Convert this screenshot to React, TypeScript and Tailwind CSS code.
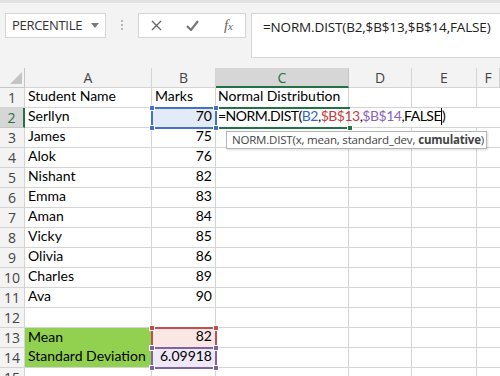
import React from "react";

const uiFont = { fontFamily: '"Open Sans", "Noto Sans", sans-serif' };
const cellFont = { fontFamily: 'Lato, "Liberation Sans", sans-serif' };

const columns = ["A", "B", "C", "D", "E", "F"];

type Row = { a?: string; b?: string; c?: React.ReactNode; bText?: boolean };

const rows: Row[] = [
  { a: "Student Name", b: "Marks", c: "Normal Distribution", bText: true },
  { a: "Serllyn", b: "70" },
  { a: "James", b: "75" },
  { a: "Alok", b: "76" },
  { a: "Nishant", b: "82" },
  { a: "Emma", b: "83" },
  { a: "Aman", b: "84" },
  { a: "Vicky", b: "85" },
  { a: "Olivia", b: "86" },
  { a: "Charles", b: "89" },
  { a: "Ava", b: "90" },
  {},
  { a: "Mean", b: "82" },
  { a: "Standard Deviation", b: "6.09918" },
  {},
];

function Formula() {
  return (
    <span className="whitespace-nowrap tracking-[-0.5px] text-black">
      =NORM.DIST(<span className="text-[#3566c4]">B2</span>,
      <span className="text-[#c0403d]">$B$13</span>,
      <span className="text-[#8a63b8]">$B$14</span>,FALSE
      <span className="inline-block h-[17px] w-px bg-black align-[-4px]" />)
    </span>
  );
}

function Handles({ color }: { color: string }) {
  const sq = "absolute h-[6px] w-[6px] border border-white";
  return (
    <>
      <span className={`${sq} -left-[4px] -top-[4px]`} style={{ background: color }} />
      <span className={`${sq} -right-[4px] -top-[4px]`} style={{ background: color }} />
      <span className={`${sq} -left-[4px] -bottom-[4px]`} style={{ background: color }} />
      <span className={`${sq} -right-[4px] -bottom-[4px]`} style={{ background: color }} />
    </>
  );
}

function TopBar() {
  return (
    <div className="h-[68px] shrink-0 overflow-hidden border-t-[3px] border-[#e2e2e2] bg-[#f3f3f3]">
      <div className="flex items-start pl-[5px] pt-[10px]">
        <div
          className="flex h-[25px] w-[101px] shrink-0 items-center justify-between border border-[#d5d5d5] bg-white pl-[6px] pr-[6px] text-[13px] text-[#333]"
          style={uiFont}
        >
          <span className="tracking-[-0.3px]">PERCENTILE</span>
          <svg width="8" height="5" viewBox="0 0 8 5">
            <path d="M0 0h8L4 5z" fill="#7a7a7a" />
          </svg>
        </div>
        <div className="flex w-[32px] shrink-0 flex-col items-center gap-[2px] pt-[7px]">
          <span className="h-[2px] w-[2px] bg-[#b5b5b5]" />
          <span className="h-[2px] w-[2px] bg-[#b5b5b5]" />
          <span className="h-[2px] w-[2px] bg-[#b5b5b5]" />
        </div>
        <div className="flex h-[25px] w-[108px] shrink-0 items-center justify-between border border-[#d5d5d5] bg-white px-[12px]">
          <svg width="11" height="11" viewBox="0 0 11 11">
            <path d="M1 1l9 9M10 1l-9 9" stroke="#666" strokeWidth="1.4" />
          </svg>
          <svg width="13" height="11" viewBox="0 0 13 11">
            <path d="M1 6l4 4 7-9" stroke="#777" strokeWidth="2.2" fill="none" />
          </svg>
          <span
            className="text-[15px] italic text-[#666]"
            style={{ fontFamily: '"Liberation Serif", serif' }}
          >
            f<span className="text-[11px]">x</span>
          </span>
        </div>
        <div
          className="ml-[5px] h-[45px] w-[260px] shrink-0 border border-[#d5d5d5] bg-white pl-[11px] pt-[3px] text-[13.5px] tracking-[-0.15px] text-[#222]"
          style={uiFont}
        >
          =NORM.DIST(B2,$B$13,$B$14,FALSE)
        </div>
      </div>
    </div>
  );
}

function Sheet() {
  const widths = "grid-cols-[25px_127px_64px_133px_63px_65px_1fr]";
  return (
    <div className="relative flex-1 overflow-hidden bg-white">
      <div className={`grid ${widths} auto-rows-[20px]`}>
        <div className="relative border-r border-b border-[#c6c6c6] bg-[#f3f3f3]">
          <svg className="absolute bottom-[3px] right-[2px]" width="12" height="12" viewBox="0 0 12 12">
            <path d="M0 12H12V0z" fill="#c4c4c4" />
          </svg>
        </div>
        {columns.map((c) => (
          <div
            key={c}
            className={
              c === "C"
                ? "flex items-center justify-center border-r border-b-2 border-r-[#c6c6c6] border-b-[#217346] bg-[#d6d6d6] text-[14px] text-[#217346]"
                : "flex items-center justify-center border-r border-b border-[#d4d4d4] bg-[#f3f3f3] text-[14px] text-[#444]"
            }
            style={uiFont}
          >
            {c}
          </div>
        ))}
        {rows.map((r, i) => {
          const n = i + 1;
          const green = n === 13 || n === 14;
          return (
            <React.Fragment key={n}>
              <div
                className={
                  n === 2
                    ? "flex items-center justify-center border-r-2 border-b border-r-[#217346] border-b-[#c6c6c6] bg-[#d6d6d6] text-[14px] text-[#217346]"
                    : "flex items-center justify-center border-r border-b border-[#d4d4d4] bg-[#f3f3f3] text-[14px] text-[#444]"
                }
                style={uiFont}
              >
                {n}
              </div>
              <div
                className={
                  green
                    ? `flex items-end border-r border-[#92d050] bg-[#92d050] px-[3px] pb-[1px] text-[14px] text-black ${n === 14 ? "border-b border-b-[#d4d4d4]" : ""}`
                    : "flex items-end border-r border-b border-[#d4d4d4] px-[3px] pb-[1px] text-[14px] text-black"
                }
                style={cellFont}
              >
                <span className="whitespace-nowrap">{r.a}</span>
              </div>
              <div
                className={`flex items-end border-r border-b border-[#d4d4d4] px-[3px] pb-[1px] text-[14px] text-black ${
                  r.bText ? "justify-start" : "justify-end"
                } ${n === 2 ? "bg-[#e3ebf8]" : n === 13 ? "bg-[#fbe6e6]" : n === 14 ? "bg-[#efe9f7]" : ""}`}
                style={cellFont}
              >
                {r.b}
              </div>
              <div
                className="relative z-10 flex items-end border-r border-b border-[#d4d4d4] pl-[2px] pb-[1px] text-[14px] text-black"
                style={cellFont}
              >
                {n === 2 ? <Formula /> : <span className="whitespace-nowrap">{r.c}</span>}
              </div>
              <div className={`border-b border-[#d4d4d4] ${n === 2 ? "" : "border-r"}`} />
              <div className={`border-b border-[#d4d4d4] ${n === 2 ? "" : "border-r"}`} />
              <div className="border-b border-[#d4d4d4]" />
            </React.Fragment>
          );
        })}
      </div>

      {/* active cell C2 */}
      <div className="absolute left-[216px] top-[39px] z-20 h-[22px] w-[134px] border-y-2 border-[#217346]">
        <span className="absolute -bottom-[4px] -right-[3px] h-[6px] w-[6px] border border-white bg-[#217346]" />
      </div>

      {/* reference highlight B2 */}
      <div className="absolute left-[151px] top-[39px] z-20 h-[22px] w-[66px] border-2 border-[#4472c4]">
        <Handles color="#4472c4" />
      </div>

      {/* reference highlight B13 */}
      <div className="absolute left-[151px] top-[259px] z-20 h-[22px] w-[66px] border-2 border-[#c0504d]">
        <Handles color="#c0504d" />
      </div>

      {/* reference highlight B14 */}
      <div className="absolute left-[151px] top-[279px] z-20 h-[22px] w-[66px] border-2 border-[#8064a2]">
        <Handles color="#8064a2" />
      </div>

      {/* function tooltip */}
      <div
        className="absolute left-[226px] top-[63px] z-30 flex h-[18px] w-[261px] items-center whitespace-nowrap border border-[#b5b5b5] bg-white px-[5px] text-[11.5px] tracking-[-0.2px] text-[#444] shadow-[1px_1px_2px_rgba(0,0,0,0.15)]"
        style={uiFont}
      >
        NORM.DIST(x, mean, standard_dev, <b className="ml-[3px] font-bold">cumulative</b>)
      </div>
    </div>
  );
}

export default function App() {
  return (
    <div className="flex h-[376px] w-[500px] flex-col overflow-hidden bg-[#f3f3f3]">
      <TopBar />
      <Sheet />
    </div>
  );
}
